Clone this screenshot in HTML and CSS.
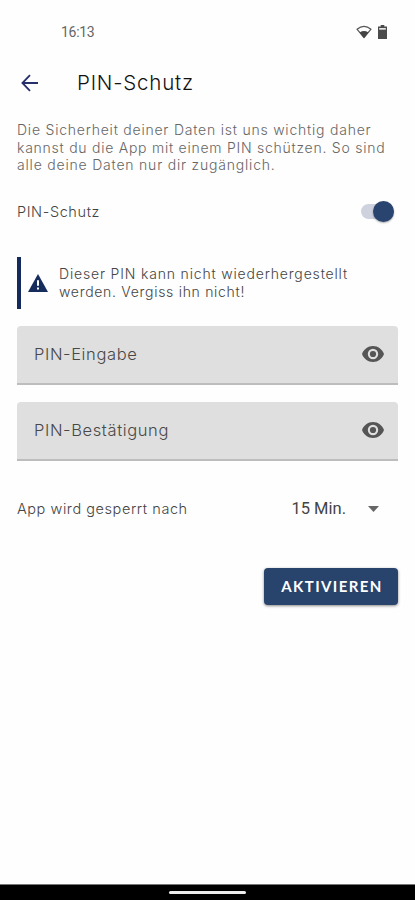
FILE: index.html
```html
<!DOCTYPE html>
<html lang="de">
<head>
<meta charset="utf-8">
<meta name="viewport" content="width=device-width, initial-scale=1">
<title>PIN-Schutz</title>
<link rel="stylesheet" href="styles.css">
</head>
<body>
<div class="screen">
  <div class="status">
    <span class="clock">16:13</span>
    <span class="status-icons">
      <svg width="16" height="14" viewBox="0 0 16 14"><path d="M1 4.2Q8-1.4 15 4.2L8 12.6Z" fill="none" stroke="#555" stroke-width="1.2" stroke-linejoin="round"/><path d="M3.6 7.4Q8 4.6 12.4 7.4L8 13Z" fill="#444"/></svg>
      <svg width="9" height="14" viewBox="0 0 9 14"><path d="M2.7 0h3.6v1.5H9V14H0V1.5h2.7z" fill="#4b4b4b"/><path d="M1.2 3h6.6v1.7H1.2z" fill="#e6e6e6"/></svg>
    </span>
  </div>
  <header class="bar">
    <svg class="back" width="18" height="18" viewBox="0 0 18 18"><path d="M17 9H1.600M9 1.200L1.400 9L9 16.800" fill="none" stroke="#26306b" stroke-width="1.800"/></svg>
    <h1>PIN-Schutz</h1>
  </header>
  <main>
    <p class="intro"><span class="i1">Die Sicherheit deiner Daten ist uns wichtig daher</span><span class="i2">kannst du die App mit einem PIN schützen. So sind</span><span class="i3">alle deine Daten nur dir zugänglich.</span></p>
    <div class="toggle-row"><span class="label">PIN-Schutz</span><span class="switch"><span class="knob"></span></span></div>
    <div class="warning">
      <svg width="20" height="18" viewBox="0 0 20 18"><path d="M10 0L20 18H0z" fill="#152c5c"/><path d="M9 6.200h2v5.600H9zM9 13.500h2v2H9z" fill="#fff"/></svg>
      <p><span class="w1">Dieser PIN kann nicht wiederhergestellt</span><span class="w2">werden. Vergiss ihn nicht!</span></p>
    </div>
    <div class="field"><span class="f1">PIN-Eingabe</span><svg width="22" height="16" viewBox="0 0 22 16"><path fill-rule="evenodd" d="M11 0C6 0 1.700 3.300 0 8c1.700 4.700 6 8 11 8s9.300-3.300 11-8C20.300 3.300 16 0 11 0zM11 13.200a5.200 5.200 0 1 1 0-10.400a5.200 5.200 0 0 1 0 10.400z" fill="#555"/><circle cx="11" cy="8" r="3.100" fill="#555"/></svg></div>
    <div class="field"><span class="f2">PIN-Bestätigung</span><svg width="22" height="16" viewBox="0 0 22 16"><path fill-rule="evenodd" d="M11 0C6 0 1.700 3.300 0 8c1.700 4.700 6 8 11 8s9.300-3.300 11-8C20.300 3.300 16 0 11 0zM11 13.200a5.200 5.200 0 1 1 0-10.400a5.200 5.200 0 0 1 0 10.400z" fill="#555"/><circle cx="11" cy="8" r="3.100" fill="#555"/></svg></div>
    <div class="lock"><span class="lock-label">App wird gesperrt nach</span><span class="time">15 Min.</span><svg width="11" height="6" viewBox="0 0 11 6"><path d="M0 0h11L5.500 6z" fill="#666"/></svg></div>
    <div class="actions"><button>AKTIVIEREN</button></div>
  </main>
  <footer><span class="handle"></span></footer>
</div>
</body>
</html>
```
FILE: styles.css
```css
* { box-sizing: border-box; }
body { margin: 0; background: #fefefe; font-family: Inter, sans-serif; font-weight: 300; color: #444; }
h1, p { margin: 0; }
svg { display: block; flex: none; }
span { white-space: nowrap; }
.screen { width: 415px; height: 900px; display: flex; flex-direction: column; }
.status { height: 64px; padding: 0 28px 0 61px; display: flex; align-items: center; justify-content: space-between; }
.clock { font: 14px Roboto, sans-serif; letter-spacing: -.3px; color: #666; }
.status-icons { display: flex; gap: 6px; }
.bar { height: 38px; padding-left: 21px; display: flex; align-items: center; gap: 38px; }
h1 { font-size: 20.500px; font-weight: 300; letter-spacing: .8px; color: #111; line-height: 26px; }
main { flex: 1; padding: 19px 17px 0; }
p span { display: block; }
.intro { font-size: 14px; line-height: 17.600px; color: #666; }
.i1 { letter-spacing: .78px; }
.i2 { letter-spacing: .75px; }
.i3 { letter-spacing: .8px; }
.toggle-row { height: 26px; margin-top: 25px; display: flex; align-items: center; justify-content: space-between; }
.label { font-size: 14.500px; letter-spacing: .6px; }
.switch { width: 33px; height: 15px; margin-right: 4px; border-radius: 8px; background: #cdd2de; display: flex; align-items: center; justify-content: flex-end; }
.knob { width: 21px; height: 21px; flex: none; border-radius: 50%; background: #28446f; box-shadow: 0 1px 2px #0005; }
.warning { height: 52px; margin-top: 32px; border-left: 4px solid #152a5c; padding-left: 7px; display: flex; align-items: center; gap: 11px; }
.warning p { font-size: 14px; line-height: 18px; color: #444; }
.w1 { letter-spacing: .83px; }
.w2 { letter-spacing: .7px; }
.field { height: 59px; margin-top: 17px; padding: 0 14px 0 17px; border-radius: 4px 4px 0 0; border-bottom: 2px solid #bdbdbd; background: #dfdfdf; display: flex; align-items: center; justify-content: space-between; font-size: 16.500px; letter-spacing: .62px; color: #484848; }
.lock { height: 28px; margin-top: 34px; padding-right: 19px; display: flex; align-items: center; }
.lock-label { flex: 1; font-size: 14.500px; letter-spacing: .56px; }
.time { font: 16.500px Roboto, sans-serif; color: #444; margin-right: 22px; }
.actions { display: flex; justify-content: flex-end; margin-top: 45px; }
button { width: 134px; height: 37px; padding: 0 0 0 2px; border: 0; border-radius: 4px; background: #28446c; box-shadow: 0 1px 3px #0007; color: #fff; font: 700 15px Lato, sans-serif; letter-spacing: 1.400px; }
footer { height: 16px; border-top: 1px solid #777; background: #000; display: flex; align-items: center; justify-content: center; }
.handle { width: 77px; height: 3px; border-radius: 2px; background: #eee; }
```
